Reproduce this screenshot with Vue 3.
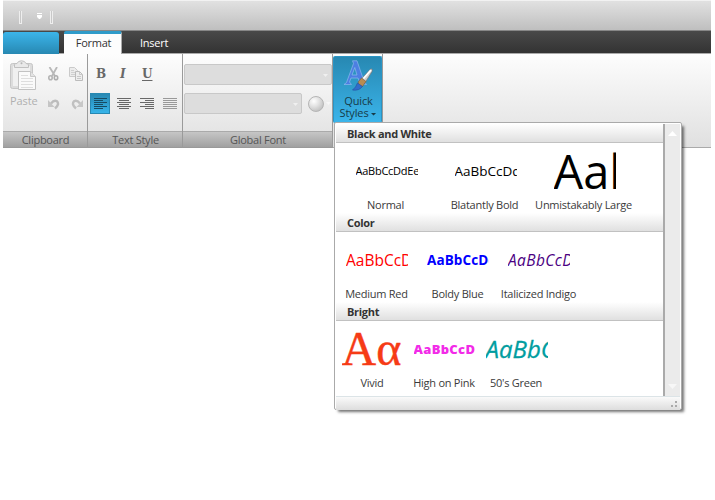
<script setup>
const sections = [
  {
    title: 'Black and White',
    cls: 'mono',
    items: [
      { name: 'Normal', sample: 'AaBbCcDdEe', cls: 'normal' },
      { name: 'Blatantly Bold', sample: 'AaBbCcDd', cls: 'blatant' },
      { name: 'Unmistakably Large', sample: 'Aal', cls: 'large' },
    ],
  },
  {
    title: 'Color',
    cls: 'color',
    items: [
      { name: 'Medium Red', sample: 'AaBbCcD', cls: 'red' },
      { name: 'Boldy Blue', sample: 'AaBbCcDd', cls: 'blue' },
      { name: 'Italicized Indigo', sample: 'AaBbCcD', cls: 'indigo' },
    ],
  },
  {
    title: 'Bright',
    cls: 'bright',
    items: [
      { name: 'Vivid', sample: 'Aα', cls: 'vivid' },
      { name: 'High on Pink', sample: 'AaBbCcD', cls: 'pink' },
      { name: "50's Green", sample: 'AaBbC', cls: 'green' },
    ],
  },
]
const aligns = [
  { name: 'left', active: true, d: 'M0 .5h13M0 2.5h9M0 4.5h13M0 6.5h9M0 8.5h13M0 10.5h9' },
  { name: 'center', d: 'M0 .5h14M2 2.5h10M0 4.5h14M2 6.5h10M0 8.5h14M2 10.5h10' },
  { name: 'right', d: 'M0 .5h14M5 2.5h9M0 4.5h14M5 6.5h9M0 8.5h14M5 10.5h9' },
  { name: 'justify', light: true, d: 'M0 .5h14M0 2.5h14M0 4.5h14M0 6.5h14M0 8.5h14M0 10.5h14' },
]
</script>

<template>
  <div class="window">
    <div class="titlebar">
      <i class="grip"></i>
      <svg class="qat" width="5" height="7" viewBox="0 0 5 7"><path d="M0 0h5v1H0zM0 2h5v2L3 6H2L0 4z" fill="#fff" /></svg>
      <i class="grip"></i>
    </div>
    <div class="tabs">
      <div class="app-button"></div>
      <div class="tab active">Format</div>
      <div class="tab">Insert</div>
    </div>
    <div class="ribbon">
      <section class="group clipboard">
        <div class="tools">
          <div class="paste">
            <svg width="28" height="31" viewBox="0 0 28 31">
              <rect x="1.500" y="3.500" width="22" height="25" rx="2" fill="#dcdcdc" stroke="#c6c6c6" />
              <rect x="4" y="6" width="17" height="20" fill="#f0f0f0" />
              <path d="M5.500 7.500V4.500Q5.500 3.500 8 3.500Q9 .8 12.500 .8Q16 .8 17 3.500Q19.500 3.500 19.500 5v2.500z" fill="#e9e9e9" stroke="#c0c0c0" />
              <circle cx="12.500" cy="3.200" r="1" fill="#b5b5b5" />
              <path d="M9.500 11.500h12l5 5v13h-17z" fill="#fafafa" stroke="#c2c2c2" />
              <path d="M21.500 11.500v5h5" fill="#e3e3e3" stroke="#c8c8c8" />
              <path d="M12 15.500h7M12 18.500h12M12 21.500h12M12 24.500h12M12 27.500h12" stroke="#dedede" />
            </svg>
            <span>Paste</span>
          </div>
          <div class="edit">
            <svg width="11" height="14" viewBox="0 0 11 14"><path d="M1.500 0L7 9M9 0L4 9" stroke="#b8b8b8" stroke-width="1.800" /><ellipse cx="2.500" cy="10.800" rx="1.700" ry="2" fill="none" stroke="#b4b4b4" stroke-width="1.600" /><ellipse cx="8" cy="10.800" rx="1.700" ry="2" fill="none" stroke="#adadad" stroke-width="1.600" /></svg>
            <svg width="15" height="14" viewBox="0 0 15 14"><path d="M.5 .5h5l3 3v6h-8z" fill="#ececec" stroke="#cacaca" /><path d="M2 3.500h3M2 5.500h4M2 7.500h4" stroke="#d0d0d0" /><path d="M6.500 4.500h4l3 3v6h-7z" fill="#eee" stroke="#bcbcbc" /><path d="M10.500 4.500v3h3M8 9.500h4M8 11.500h4" fill="none" stroke="#c9c9c9" /></svg>
            <svg width="12" height="12" viewBox="0 0 12 12"><path d="M3 5.500Q6 1.500 9 3.200Q11.800 6.500 7 10.500" fill="none" stroke="#bcbcbc" stroke-width="2.400" /><path d="M0 2V9h6.500z" fill="#c5c5c5" /></svg>
            <svg class="redo" width="12" height="12" viewBox="0 0 12 12"><path d="M9 5.500Q6 1.500 3 3.200Q.2 6.500 5 10.500" fill="none" stroke="#c0c0c0" stroke-width="2.400" /><path d="M12 2V9H5.500z" fill="#c8c8c8" /></svg>
          </div>
        </div>
        <div class="caption">Clipboard</div>
      </section>
      <section class="group text-style">
        <div class="tools">
          <div class="glyphs"><b>B</b><em>I</em><u>U</u></div>
          <div class="aligns">
            <div v-for="a in aligns" :key="a.name" class="align" :class="{ on: a.active, light: a.light }">
              <svg width="14" height="11" viewBox="0 0 14 11"><path :d="a.d" stroke="currentColor" /></svg>
            </div>
          </div>
        </div>
        <div class="caption">Text Style</div>
      </section>
      <section class="group font">
        <div class="tools">
          <div class="combo wide"><i class="down"></i></div>
          <div class="combo-row">
            <div class="combo"><i class="down"></i></div>
            <div class="ball"></div>
            <i class="down"></i>
          </div>
        </div>
        <div class="caption">Global Font</div>
      </section>
      <section class="group quick">
        <div class="quick-button">
          <svg width="30" height="32" viewBox="0 0 30 32">
            <path fill-rule="evenodd" d="M1 24.500L3.500 22.500 10.500 3.500 9.500 .8h4.500l7 20.500 2.500 3.200H14.500l2-2.500-1.500-4H8L6.500 22l2 2.500zM9 15h5L11.800 7.500z" fill="#4c7fe2" stroke="#8db9ee" stroke-width=".7" />
            <path d="M18.500 19L27 9.500Q29.800 7.500 29 11.500L22.500 22z" fill="#cfcfcf" stroke="#777" stroke-width=".7" />
            <path d="M20.500 18.500l7.500-8.500" stroke="#fff" stroke-width="1.800" />
            <path d="M15.500 21.500l3-3.500 4.500 3.500-3.500 5-4.500-1z" fill="#b98c52" stroke="#765b3d" stroke-width=".6" />
            <path d="M14.500 23l5 3.500Q16 31 9.500 30Q13 27.500 14.500 23z" fill="#316cca" stroke="#234e9f" stroke-width=".6" />
          </svg>
          <span class="first">Quick</span>
          <span class="second">Styles <i class="down"></i></span>
        </div>
      </section>
    </div>
    <div class="popup">
      <div class="body">
        <div class="list">
          <section v-for="s in sections" :key="s.title" class="cat" :class="s.cls">
            <h3>{{ s.title }}</h3>
            <div class="items">
              <div v-for="i in s.items" :key="i.name" class="item">
                <div class="sample" :class="i.cls"><span>{{ i.sample }}</span></div>
                <div class="name">{{ i.name }}</div>
              </div>
            </div>
          </section>
        </div>
        <div class="scroll"><i class="up"></i><i class="down"></i></div>
      </div>
      <div class="foot">
        <svg width="6" height="6" viewBox="0 0 6 6"><path d="M4 0h2v2H4zM0 4h2v2H0zM4 4h2v2H4z" fill="#aaa" /></svg>
      </div>
    </div>
  </div>
</template>

<style>
body { background: #fff; overflow: hidden; }
</style>

<style scoped>
* { box-sizing: border-box; }
.window { position: relative; width: 715px; height: 500px; padding-left: 3px; font: 11px/14px "Open Sans", "Noto Sans", sans-serif; letter-spacing: -.25px; color: #3a3a3a; background: #fff; }
svg { display: block; flex: none; }
.titlebar { width: 708px; height: 31px; display: flex; align-items: flex-start; padding: 10px 0 0 16px; background: linear-gradient(#e1e1e1, #bfbfbf); border-top: 1px solid #f2f2f2; border-bottom: 1px solid #878787; }
.grip { width: 3px; height: 13px; border: 1px solid #eee; border-top: 0; background: #c8c8c8; }
.qat { margin: 2px 8px 0 15px; }
.tabs { width: 708px; height: 23px; display: flex; background: linear-gradient(#494949, #333); border-bottom: 1px solid #aaa; }
.app-button { width: 56px; height: 22px; margin-top: 1px; border-radius: 3px 3px 0 0; background: linear-gradient(#3cb5ea, #2788b2); }
.tab { height: 22px; line-height: 23px; color: #fff; margin-left: 18px; }
.tab.active { width: 58px; height: 23px; margin-left: 5px; padding-left: 2px; text-align: center; color: #333; background: #fdfdfd; border-top: 3px solid #2f9bc9; border-right: 1px solid #aaa; border-radius: 2px 2px 0 0; line-height: 18px; }
.ribbon { width: 708px; height: 94px; display: flex; background: linear-gradient(#fdfdfd, #e0e0e0); border-bottom: 1px solid #aaa; }
.group { height: 94px; display: flex; flex-direction: column; border-right: 1px solid #9a9a9a; }
.tools { height: 77px; }
.caption { height: 17px; line-height: 16px; padding-left: 1px; text-align: center; color: #555; border-top: 1px solid #aaa; border-bottom: 1px solid #999; background: linear-gradient(#c6c6c6, #a0a0a0); }
.clipboard { width: 85px; }
.clipboard .tools { display: flex; }
.paste { width: 41px; padding: 6px 0 0 6px; color: #b0b0b0; font-size: 11px; }
.paste span { display: block; margin-top: 3px; margin-left: 1px; letter-spacing: -.1px; }
.edit { display: grid; grid-template-columns: 21px 15px; grid-template-rows: 31px 14px; padding: 13px 0 0 4px; }
.edit .redo { margin-left: 2px; }
.text-style { width: 95px; }
.glyphs { height: 39px; display: flex; padding: 12px 0 0 8px; font: bold 12px/16px "DejaVu Serif", serif; color: #686868; }
.glyphs b, .glyphs em, .glyphs u { width: 23px; letter-spacing: 0; }
.glyphs em { padding-left: 1px; }
.glyphs u { text-decoration-thickness: 1px; text-underline-offset: 2px; }
.aligns { display: flex; padding-left: 2px; }
.align { width: 22px; height: 21px; margin-right: 2px; padding: 5px 0 0 4px; color: #686868; }
.align.on { width: 21px; margin-right: 3px; background: linear-gradient(#2788b2, #37b4e9); border: 1px solid #2788b2; color: #174b62; padding: 4px 0 0 3px; }
.align.light { color: #999; }
.font { width: 150px; }
.combo { position: relative; width: 118px; height: 21px; border: 1px solid #c8c8c8; border-radius: 2px; background: #ddd; }
.combo.wide { width: 148px; margin: 10px 0 8px 1px; }
.combo-row { display: flex; align-items: center; padding-left: 1px; }
.down { width: 5px; height: 3px; background: currentColor; clip-path: polygon(0 0, 100% 0, 50% 100%); }
.combo .down { position: absolute; right: 3px; top: 9px; background: #f0f0f0; }
.combo-row > .down { background: #f7f7f7; margin-left: 2px; }
.ball { width: 16px; height: 16px; margin-left: 6px; border-radius: 50%; border: 1px solid #b5b5b5; background: radial-gradient(circle at 35% 30%, #fff, #e3e3e3 38%, #b0b0b0); }
.quick { width: 50px; }
.quick-button { width: 49px; height: 67px; margin-top: 2px; padding-top: 3px; display: flex; flex-direction: column; align-items: center; border-radius: 2px; border: 1px solid #2a94c4; border-bottom: 0; background: linear-gradient(#2788b2, #3bb5eb); color: #173b49; line-height: 12px; letter-spacing: -.1px; }
.quick-button .first { margin-top: 3px; padding-left: 2px; }
.quick-button .second { display: flex; align-items: center; gap: 2px; padding-left: 1px; }
.quick-button .down { width: 6px; margin-top: 2px; }
.popup { position: absolute; left: 334px; top: 122px; width: 348px; height: 288px; padding: 1px; border: 1px solid #aaa; border-radius: 2px; background: #fff; box-shadow: 3px 3px 3px -1px rgba(0, 0, 0, .55); }
.body { height: 272px; display: flex; }
.list { width: 327px; }
.cat { height: 89px; }
h3 { margin: 0; height: 19px; padding-left: 11px; border-bottom: 1px solid #c1c1c1; background: linear-gradient(#fff, #e0e0e0); font-size: 11px; line-height: 19px; font-weight: 700; color: #333; letter-spacing: -.3px; }
.items { display: flex; padding-left: 1px; }
.item { width: 99px; display: flex; flex-direction: column; align-items: center; flex: none; }
.color .item { width: 81px; }
.bright .item { width: 72px; }
.sample { width: 62px; height: 56px; overflow: hidden; display: flex; align-items: center; white-space: nowrap; letter-spacing: 0; color: #000; }
.name { line-height: 13px; margin-top: -1px; padding-right: 2px; white-space: nowrap; }
.normal { font-size: 11px; letter-spacing: -.25px; }
.blatant { font-size: 13.500px; }
.large { font-size: 47px; }
.color .sample, .bright .sample { margin-left: -1px; }
.red { font-size: 15.500px; color: #f00; }
.blue { font-size: 13.500px; letter-spacing: .1px; font-weight: 700; color: #00f; }
.indigo { font-size: 15.500px; letter-spacing: .4px; font-style: italic; color: #4b0082; }
.vivid { font: 48px/56px "Liberation Serif", serif; color: #f63b16; -webkit-text-stroke: .4px #f63b16; }
.pink { font-size: 13px; letter-spacing: .3px; font-weight: 800; color: #f22be8; }
.green { font-size: 24px; font-style: italic; color: #009da0; -webkit-text-stroke: .3px #009da0; }
.scroll { width: 17px; display: flex; flex-direction: column; align-items: center; justify-content: space-between; padding: 7px 0; border-left: 2px solid #aaa; background: #ebebeb; }
.up { width: 9px; height: 5px; background: #fff; clip-path: polygon(50% 0, 100% 100%, 0 100%); }
.scroll .down { width: 9px; height: 5px; background: #f7f7f7; }
.foot { height: 14px; display: flex; justify-content: flex-end; padding: 4px 3px 0 0; border-top: 1px solid #dce4e7; background: linear-gradient(#fafafa, #ddd); }
</style>
